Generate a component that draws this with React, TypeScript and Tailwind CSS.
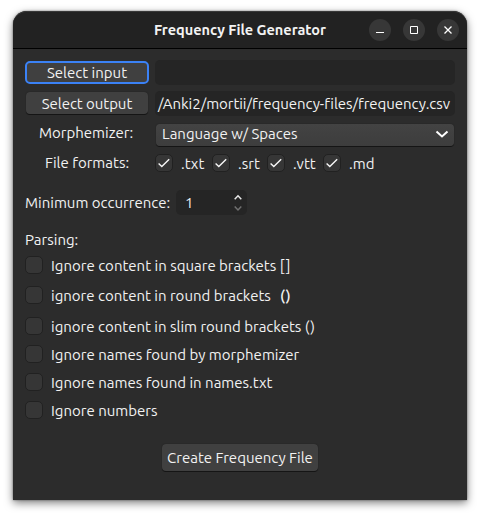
import type { ReactNode } from "react";

function Box({ checked = false }: { checked?: boolean }) {
  return (
    <span className="flex size-[18px] shrink-0 items-center justify-center rounded-[5px] border border-[#212121] bg-[#363636]">
      {checked && (
        <svg width="14" height="14" viewBox="0 0 14 14" fill="none" stroke="#f7f7f7" strokeWidth="1.4">
          <path d="M1.6 7.6 4.8 10.6 12.2 3.2" />
        </svg>
      )}
    </span>
  );
}

function Option({ height, children }: { height: string; children: ReactNode }) {
  return (
    <label className={`flex items-start gap-2 ${height}`}>
      <Box />
      <span className="leading-[20px]">{children}</span>
    </label>
  );
}

function Format({ width, name }: { width: string; name: string }) {
  return (
    <label className={`flex items-start gap-2 ${width}`}>
      <Box checked />
      <span>{name}</span>
    </label>
  );
}

function WindowButton({ children }: { children: ReactNode }) {
  return (
    <button className="flex size-[22px] items-center justify-center rounded-full bg-[#373737]">
      <svg width="22" height="22" viewBox="0 0 22 22" fill="none" stroke="#ffffff">
        {children}
      </svg>
    </button>
  );
}

export default function App() {
  return (
    <div className="h-[516px] w-[480px] overflow-hidden bg-white pl-[13px] pt-[11px] font-['Ubuntu','Noto_Sans',sans-serif] text-[15px] leading-[20px] text-[#f2f2f2]">
      <main className="flex h-[489px] w-[454px] flex-col rounded-t-[14px] bg-[#2c2c2c] shadow-[0_3px_9px_rgba(0,0,0,0.5),0_0_2px_rgba(0,0,0,0.5)]">
        <header className="flex h-[38px] shrink-0 rounded-t-[14px] border-b border-t border-b-black border-t-[#383838] bg-[#222222] pt-[7px]">
          <h1 className="ml-[141px] w-[215px] whitespace-nowrap text-[14.5px] font-bold leading-[22px] tracking-[-0.02px]">
            Frequency File Generator
          </h1>
          <div className="flex gap-3">
            <WindowButton>
              <path d="M7 13.5h8" />
            </WindowButton>
            <WindowButton>
              <path d="M7.5 7.5h7v7h-7z" />
            </WindowButton>
            <WindowButton>
              <path d="m7.5 7.5 7 7m0-7-7 7" strokeWidth="1.3" />
            </WindowButton>
          </div>
        </header>

        <section className="flex flex-col pl-3 pt-[11px]">
          <div className="flex h-[31px] items-start gap-[6px]">
            <button className="mt-px h-[23px] w-[124px] rounded-[5px] border-2 border-[#3b82f6] bg-[#404040] leading-[19px]">
              Select input
            </button>
            <div className="h-[25px] w-[300px] rounded-[5px] bg-[#252525]" />
          </div>
          <div className="flex h-[31px] items-start">
            <button className="ml-px mt-px h-[22px] w-[122px] rounded-[4px] bg-[#404040] leading-[21px] shadow-[0_1px_0_#151515,0_0_1px_#151515]">
              <span className="tracking-[-0.05px]">Select output</span>
            </button>
            <div className="ml-[7px] h-[25px] w-[300px] overflow-hidden whitespace-nowrap rounded-[5px] bg-[#252525] pl-[3px] leading-[25px]">
              <span className="tracking-[-0.04px]">/Anki2/mortii/frequency-files/frequency.csv</span>
            </div>
          </div>
          <div className="flex h-[31px] items-start">
            <span className="w-[131px] pl-[14px] leading-[22px]">Morphemizer:</span>
            <div className="mt-[2px] flex h-[22px] w-[298px] items-start justify-between rounded-[4px] bg-gradient-to-b from-[#434343] to-[#3d3d3d] pl-[6px] pr-[5px] shadow-[0_1px_0_#151515,0_0_1px_#151515]">
              <span>Language w/ Spaces</span>
              <svg className="mt-[6px]" width="14" height="10" viewBox="0 0 14 10" fill="none" stroke="#ffffff" strokeWidth="2">
                <path d="m1.5 1.5 5.5 5 5.5-5" />
              </svg>
            </div>
          </div>
          <div className="flex h-[37px] items-start">
            <span className="w-[130px] pl-[20px] leading-[20px]">File formats:</span>
            <div className="mt-px flex">
              <Format width="w-[57px]" name=".txt" />
              <Format width="w-[55px]" name=".srt" />
              <Format width="w-[56px]" name=".vtt" />
              <Format width="w-[56px]" name=".md" />
            </div>
          </div>
          <div className="flex h-[40px] items-start">
            <span className="w-[151px] whitespace-nowrap leading-[25px]">Minimum occurrence:</span>
            <div className="flex h-[25px] w-[71px] items-center justify-between rounded-[5px] bg-[#252525] pl-[9px] pr-[4px]">
              <span>1</span>
              <svg width="10" height="18" viewBox="0 0 10 18" fill="none" strokeWidth="1.5">
                <path d="m1.7 5.2 3.3-3.4 3.3 3.4" stroke="#e8e8e8" />
                <path d="m1.7 12.6 3.3 3.4 3.3-3.4" stroke="#707070" />
              </svg>
            </div>
          </div>
          <h2 className="h-[26px] leading-[20px]">Parsing:</h2>
          <Option height="h-[30px]">Ignore content in square brackets []</Option>
          <Option height="h-[31px]">
            ignore content in round brackets
            <span className="ml-[9px] font-medium">()</span>
          </Option>
          <Option height="h-[28px]">ignore content in slim round brackets ()</Option>
          <Option height="h-[28px]">Ignore names found by morphemizer</Option>
          <Option height="h-[28px]">Ignore names found in names.txt</Option>
          <Option height="h-[43px]">Ignore numbers</Option>
          <button className="ml-[137px] h-[27px] w-[156px] whitespace-nowrap rounded-[4px] bg-[#404040] leading-[26px] shadow-[0_1px_0_#151515,0_0_1px_#151515]">
            Create Frequency File
          </button>
        </section>
      </main>
    </div>
  );
}
